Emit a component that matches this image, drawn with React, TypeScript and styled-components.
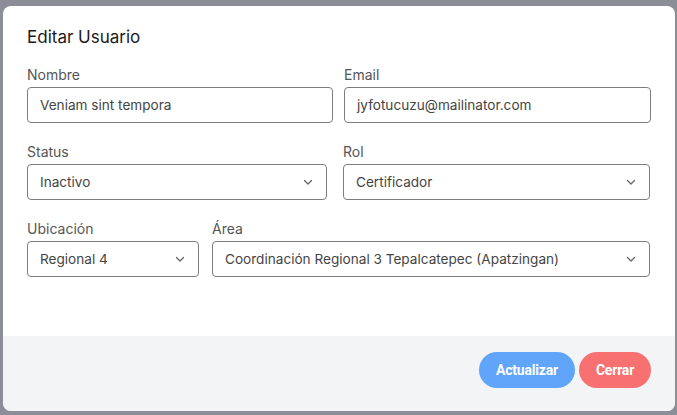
import styled, { createGlobalStyle } from 'styled-components';

const GlobalStyle = createGlobalStyle`
  html, body {
    margin: 0;
    padding: 0;
    background: #8b8e97;
    font-family: Inter, "Noto Sans", sans-serif;
  }
  * { box-sizing: border-box; }
`;

const Backdrop = styled.div`
  width: 677px;
  height: 415px;
  padding: 6px 2px 4px 3px;
  background: #8b8e97;
`;

const Modal = styled.div`
  height: 405px;
  background: #fff;
  border-radius: 8px;
  overflow: hidden;
  display: flex;
  flex-direction: column;
`;

const Body = styled.div`
  flex: 1;
  padding: 19px 25px 0 24px;
`;

const Title = styled.h2`
  margin: 0 0 16px;
  font-size: 17px;
  line-height: 24px;
  font-weight: 400;
  color: #1a1a1a;
`;

const Row = styled.div<{ $cols: string; $gap: number }>`
  display: grid;
  grid-template-columns: ${(p) => p.$cols};
  column-gap: ${(p) => p.$gap}px;
  margin-bottom: 19px;
`;

const Field = styled.div`
  display: flex;
  flex-direction: column;
`;

const Label = styled.label`
  font-size: 14px;
  line-height: 20px;
  color: #555;
  margin-bottom: 2px;
`;

const Box = styled.div`
  height: 36px;
  border: 1px solid #7d7d7d;
  border-radius: 4px;
  padding: 0 12px;
  display: flex;
  align-items: center;
  justify-content: space-between;
  font-size: 13.6px;
  color: #444;
  white-space: nowrap;
`;

const Chevron = () => (
  <svg width="12" height="12" viewBox="0 0 12 12" fill="none">
    <path d="M2.5 4.5 6 8l3.5-3.5" stroke="#666" strokeWidth="1.3" strokeLinecap="round" strokeLinejoin="round" />
  </svg>
);

const Footer = styled.div`
  height: 75px;
  background: #f3f4f6;
  display: flex;
  justify-content: flex-end;
  align-items: flex-start;
  gap: 4px;
  padding: 16px 24px 0 0;
`;

const Button = styled.button<{ $color: string; $w: number }>`
  height: 36px;
  width: ${(p) => p.$w}px;
  border: none;
  border-radius: 18px;
  background: ${(p) => p.$color};
  color: #fff;
  font-family: Roboto, "Liberation Sans", sans-serif;
  font-weight: 700;
  font-size: 14px;
  letter-spacing: -0.2px;
  cursor: pointer;
`;

function TextField({ label, value }: { label: string; value: string }) {
  return (
    <Field>
      <Label>{label}</Label>
      <Box>{value}</Box>
    </Field>
  );
}

function SelectField({ label, value }: { label: string; value: string }) {
  return (
    <Field>
      <Label>{label}</Label>
      <Box>
        <span>{value}</span>
        <Chevron />
      </Box>
    </Field>
  );
}

export default function App() {
  return (
    <>
      <GlobalStyle />
      <Backdrop>
        <Modal>
          <Body>
            <Title>Editar Usuario</Title>
            <Row $cols="306px 307px" $gap={11}>
              <TextField label="Nombre" value="Veniam sint tempora" />
              <TextField label="Email" value="jyfotucuzu@mailinator.com" />
            </Row>
            <Row $cols="300px 307px" $gap={16}>
              <SelectField label="Status" value="Inactivo" />
              <SelectField label="Rol" value="Certificador" />
            </Row>
            <Row $cols="172px 438px" $gap={13}>
              <SelectField label="Ubicación" value="Regional 4" />
              <SelectField label="Área" value="Coordinación Regional 3 Tepalcatepec (Apatzingan)" />
            </Row>
          </Body>
          <Footer>
            <Button $color="#60a5fa" $w={96}>Actualizar</Button>
            <Button $color="#f87171" $w={72}>Cerrar</Button>
          </Footer>
        </Modal>
      </Backdrop>
    </>
  );
}
